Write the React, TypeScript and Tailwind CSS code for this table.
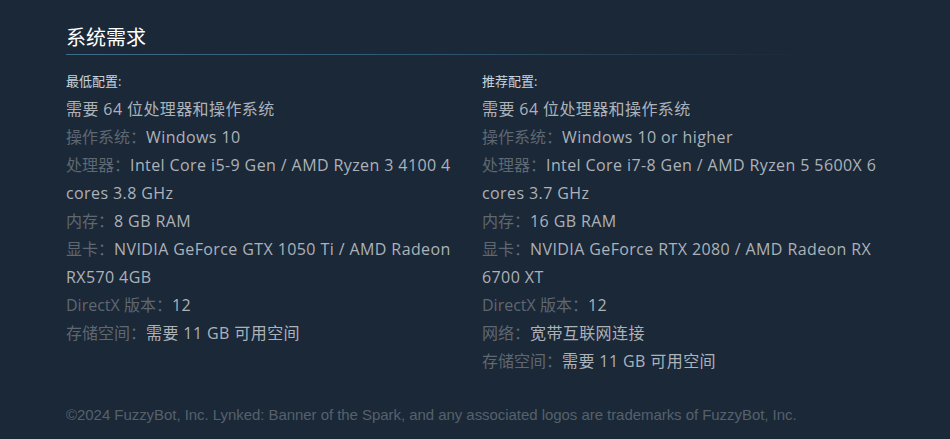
import React from "react";

type Row = { label?: string; value: string };

const minRows: Row[] = [
  { value: "需要 64 位处理器和操作系统" },
  { label: "操作系统：", value: "Windows 10" },
  { label: "处理器：", value: "Intel Core i5-9 Gen / AMD Ryzen 3 4100 4 cores 3.8 GHz" },
  { label: "内存：", value: "8 GB RAM" },
  { label: "显卡：", value: "NVIDIA GeForce GTX 1050 Ti / AMD Radeon RX570 4GB" },
  { label: "DirectX 版本：", value: "12" },
  { label: "存储空间：", value: "需要 11 GB 可用空间" },
];

const recRows: Row[] = [
  { value: "需要 64 位处理器和操作系统" },
  { label: "操作系统：", value: "Windows 10 or higher" },
  { label: "处理器：", value: "Intel Core i7-8 Gen / AMD Ryzen 5 5600X 6 cores 3.7 GHz" },
  { label: "内存：", value: "16 GB RAM" },
  { label: "显卡：", value: "NVIDIA GeForce RTX 2080 / AMD Radeon RX 6700 XT" },
  { label: "DirectX 版本：", value: "12" },
  { label: "网络：", value: "宽带互联网连接" },
  { label: "存储空间：", value: "需要 11 GB 可用空间" },
];

function Col({ title, rows }: { title: string; rows: Row[] }) {
  return (
    <div>
      <div className="text-[13px] leading-[18px] text-[#c6d4df] mb-[5px]">{title}</div>
      <ul>
        {rows.map((r, i) => (
          <li key={i} className="text-[16px] leading-[28px] text-[#acb2b8]">
            {r.label && <span className="text-[#5f6770]">{r.label}</span>}
            <span className="tracking-[0.4px]">{r.value}</span>
          </li>
        ))}
      </ul>
    </div>
  );
}

export default function App() {
  return (
    <div
      className="w-[950px] h-[439px] bg-[#1b2838] overflow-hidden"
      style={{ fontFamily: '"Open Sans", "Noto Sans CJK SC", sans-serif' }}
    >
      <div className="pl-[66px] pt-[25px]">
        <h2 className="text-[20px] leading-[26px] text-white font-normal mb-[3px]">系统需求</h2>
        <div className="h-px w-[740px] bg-gradient-to-r from-[#3d6c8a] via-[#2f5570] to-[#1b2838] mb-[17px]" />
        <div className="grid grid-cols-[410px_410px] gap-x-[6px]">
          <Col title="最低配置:" rows={minRows} />
          <Col title="推荐配置:" rows={recRows} />
        </div>
        <div
          className="mt-[31px] text-[15px] leading-[18px] tracking-[-0.05px] text-[#56616b]"
          style={{ fontFamily: '"Liberation Sans", Arial, sans-serif' }}
        >
          ©2024 FuzzyBot, Inc. Lynked: Banner of the Spark, and any associated logos are trademarks of FuzzyBot, Inc.
        </div>
      </div>
    </div>
  );
}
